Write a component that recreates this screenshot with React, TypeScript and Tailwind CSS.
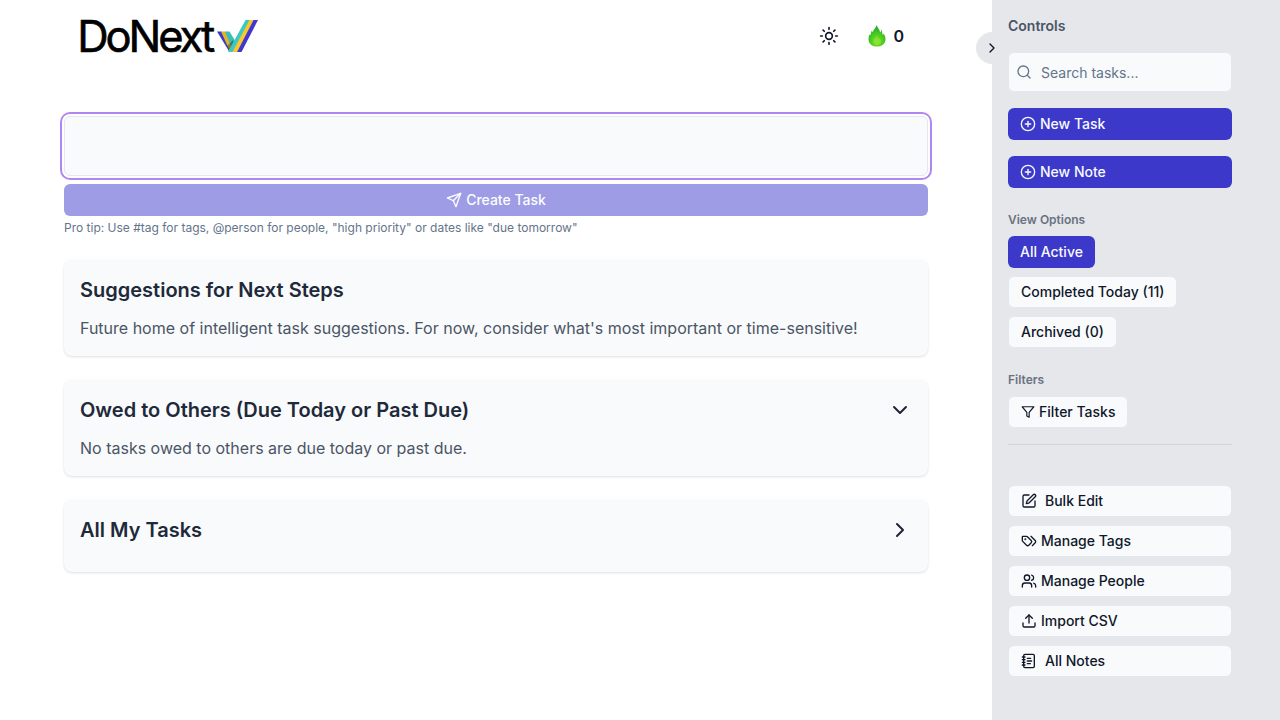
import { useState } from "react";
import type { ReactNode } from "react";
import {
  ChevronDown,
  ChevronRight,
  CirclePlus,
  NotebookText,
  Search,
  SquarePen,
  Sun,
  Upload,
  Users,
} from "lucide-react";

function Logo() {
  return (
    <svg className="-ml-2 overflow-visible" width="188" height="60" viewBox="-8 -12 188 60" role="img" aria-label="DoNext">
      <text x="-2.700" y="33.5" fontSize="43.5" textLength="138" lengthAdjust="spacing" className="fill-black font-['Inter',sans-serif]" stroke="#000" strokeWidth="0.6">
        DoNext
      </text>
      <path d="M137 13.500h4.500l12 20.500h-4z" fill="#3c38cc" />
      <path d="M141 13.500h4.500l7.500 14-3 6z" fill="#e3b51f" />
      <path d="M145 13.500h4.500l5.500 9-4 6z" fill="#3dbdb8" />
      <path d="M147 28l6-6 1 3-4 9z" fill="#18233a" opacity=".4" />
      <path d="M165.500 2h5L153.500 34h-5.500z" fill="#3cc9c4" />
      <path d="M169.500 2h4.500L157 34h-4.500z" fill="#fdc727" />
      <path d="M173.500 2h4.500L161.500 34H157z" fill="#4037cc" />
    </svg>
  );
}

function Flame() {
  return (
    <svg width="20" height="22" viewBox="0 0 20 22">
      <defs>
        <radialGradient id="flame" cx="50%" cy="78%" r="68%">
          <stop offset="0" stopColor="#7fe02a" />
          <stop offset=".55" stopColor="#4ccb20" />
          <stop offset="1" stopColor="#27a72c" />
        </radialGradient>
      </defs>
      <path d="M9.800 0c.3 2.600 3 4.200 3.400 7.400.7-.7 1-1.700.9-2.900 1.200 1.600 1.100 3.300 1.700 5.400.5-.3.700-.8.700-1.500 1.300 1.700 2 3.500 2 5.600 0 4.700-3.500 7.600-8.500 7.600s-8.500-2.900-8.500-7.600c0-2 .5-3.700 1.500-5.100.1.700.3 1.100.8 1.300-.1-2 .3-3.300 1.200-4.700.1.800.4 1.400.9 1.700C6.200 4.500 9.100 3 9.800 0z" fill="url(#flame)" />
      <path d="M9.800 10.500c.4 1.600 1.500 2.200 2 3.700l.9-1c.9 1.100 1.300 2.100 1.300 3.200 0 2.200-1.600 3.600-4 3.600s-4-1.400-4-3.600c0-1.200.4-2.200 1.200-3.200l.8 1c.1-1.400 1.500-2.100 1.800-3.700z" fill="#a0ea3a" opacity=".5" />
    </svg>
  );
}

function StrokeIcon({ size = 16, children }: { size?: number; children: ReactNode }) {
  return (
    <svg width={size} height={size} viewBox="0 0 24 24" fill="none" stroke="currentColor" strokeWidth="2" strokeLinecap="round" strokeLinejoin="round">
      {children}
    </svg>
  );
}

function Send() {
  return (
    <StrokeIcon>
      <path d="m22 2-7 20-4-9-9-4Z" />
      <path d="M22 2 11 13" />
    </StrokeIcon>
  );
}

function Funnel() {
  return (
    <StrokeIcon size={14}>
      <path d="M22 3H2l8 9.460V19l4 2v-8.540L22 3z" />
    </StrokeIcon>
  );
}

function TagPair() {
  return (
    <StrokeIcon>
      <path d="m15 5 6.300 6.300a2.400 2.400 0 0 1 0 3.400L17 19" />
      <path d="M9.586 5.586A2 2 0 0 0 8.172 5H3a1 1 0 0 0-1 1v5.172a2 2 0 0 0 .586 1.414L8.290 18.290a2.426 2.426 0 0 0 3.420 0l3.580-3.580a2.426 2.426 0 0 0 0-3.420z" />
      <circle cx="6.500" cy="9.500" r=".5" fill="currentColor" />
    </StrokeIcon>
  );
}

function Card({ title, icon, children }: { title: string; icon?: ReactNode; children?: ReactNode }) {
  return (
    <section className="rounded-lg bg-[#f9fafc] p-4 shadow-sm">
      <div className="flex h-7 items-center justify-between">
        <h2 className="text-xl font-semibold text-gray-800">{title}</h2>
        {icon && <button className="flex size-6 items-center justify-center text-[#1e2538]">{icon}</button>}
      </div>
      <p className="mt-3 text-base text-gray-600">{children}</p>
    </section>
  );
}

function ToolButton({ icon, label, wide = false }: { icon: ReactNode; label: string; wide?: boolean }) {
  return (
    <button className={`flex h-8 w-full items-center rounded-md border border-[#e2e8f0] bg-[#f9fafc] px-3 text-sm font-medium text-[#0f172a] ${wide ? "gap-2" : "gap-1"}`}>
      {icon}
      {label}
    </button>
  );
}

const primary = "flex h-8 w-full items-center gap-1 rounded-md bg-[#3c38ca] px-3 text-sm font-medium text-[#f8fafc]";
const outline = "flex h-8 items-center gap-1 rounded-md border border-[#e2e8f0] bg-[#f9fafc] px-3 text-sm font-medium text-[#0f172a]";

export default function App() {
  const [draft, setDraft] = useState("");
  return (
    <div className="flex h-screen overflow-hidden bg-white font-['Inter',sans-serif] antialiased">
      <main className="min-w-0 flex-1 px-16">
        <header className="flex h-[72px] items-center justify-between pr-6 pl-4">
          <Logo />
          <div className="flex items-center text-[#0f172a]">
            <Sun size={20} />
            <div className="ml-7 flex items-center gap-1.5">
              <Flame />
              <span className="text-base font-semibold">0</span>
            </div>
          </div>
        </header>
        <div className="mt-11">
          <textarea
            aria-label="New task"
            value={draft}
            onChange={(event) => setDraft(event.target.value)}
            className="block h-[60px] w-full resize-none rounded-md border border-[#e2e8f0] bg-[#f9fafc] px-3 py-2 ring-2 ring-[#b185f2] ring-offset-2 ring-offset-[#fff] outline-none"
          />
          <button className="mt-2 flex h-8 w-full items-center justify-center gap-1 rounded-md bg-[#9e9ce5] text-sm font-medium text-[#fcfdff]">
            <Send />
            Create Task
          </button>
          <p className="mt-1 text-xs text-[#64748b]">
            Pro tip: Use #tag for tags, @person for people, "high priority" or dates like "due tomorrow"
          </p>
        </div>
        <div className="mt-6 flex flex-col gap-6">
          <Card title="Suggestions for Next Steps">
            Future home of intelligent task suggestions. For now, consider what's most important or time-sensitive!
          </Card>
          <Card title="Owed to Others (Due Today or Past Due)" icon={<ChevronDown size={24} />}>
            No tasks owed to others are due today or past due.
          </Card>
          <Card title="All My Tasks" icon={<ChevronRight size={24} />} />
        </div>
      </main>
      <aside className="relative w-72 shrink-0 bg-[#e5e7eb] pt-4 pr-12 pl-4">
        <button aria-label="Collapse controls" className="absolute top-8 -left-4 flex size-8 items-center justify-center rounded-full bg-[#e5e7eb] text-[#0f172a]">
          <ChevronRight size={16} />
        </button>
        <h3 className="text-sm font-semibold text-gray-600">Controls</h3>
        <label className="mt-4 flex h-10 items-center gap-[9px] rounded-md border border-[#e2e8f0] bg-[#f9fafc] px-[7px] text-[#64748b]">
          <Search size={16} />
          <input placeholder="Search tasks..." className="w-40 pt-0.5 text-sm outline-none placeholder:text-[#64748b]" />
        </label>
        <div className="mt-4 flex flex-col gap-4">
          <button className={primary}><CirclePlus size={16} />New Task</button>
          <button className={primary}><CirclePlus size={16} />New Note</button>
        </div>
        <h4 className="mt-6 text-xs font-semibold text-gray-500">View Options</h4>
        <div className="mt-2 flex flex-col items-start gap-2">
          <button className="h-8 rounded-md bg-[#3c38ca] px-3 text-sm font-medium text-[#f8fafc]">All Active</button>
          <button className={outline}>Completed Today (11)</button>
          <button className={outline}>Archived (0)</button>
        </div>
        <h4 className="mt-6 text-xs font-semibold text-gray-500">Filters</h4>
        <div className="mt-2 border-b border-gray-300 pb-4">
          <button className={outline}><Funnel />Filter Tasks</button>
        </div>
        <div className="mt-10 flex flex-col gap-2">
          <ToolButton icon={<SquarePen size={16} />} label="Bulk Edit" wide />
          <ToolButton icon={<TagPair />} label="Manage Tags" />
          <ToolButton icon={<Users size={16} />} label="Manage People" />
          <ToolButton icon={<Upload size={16} />} label="Import CSV" />
          <ToolButton icon={<NotebookText size={16} />} label="All Notes" wide />
        </div>
      </aside>
    </div>
  );
}
